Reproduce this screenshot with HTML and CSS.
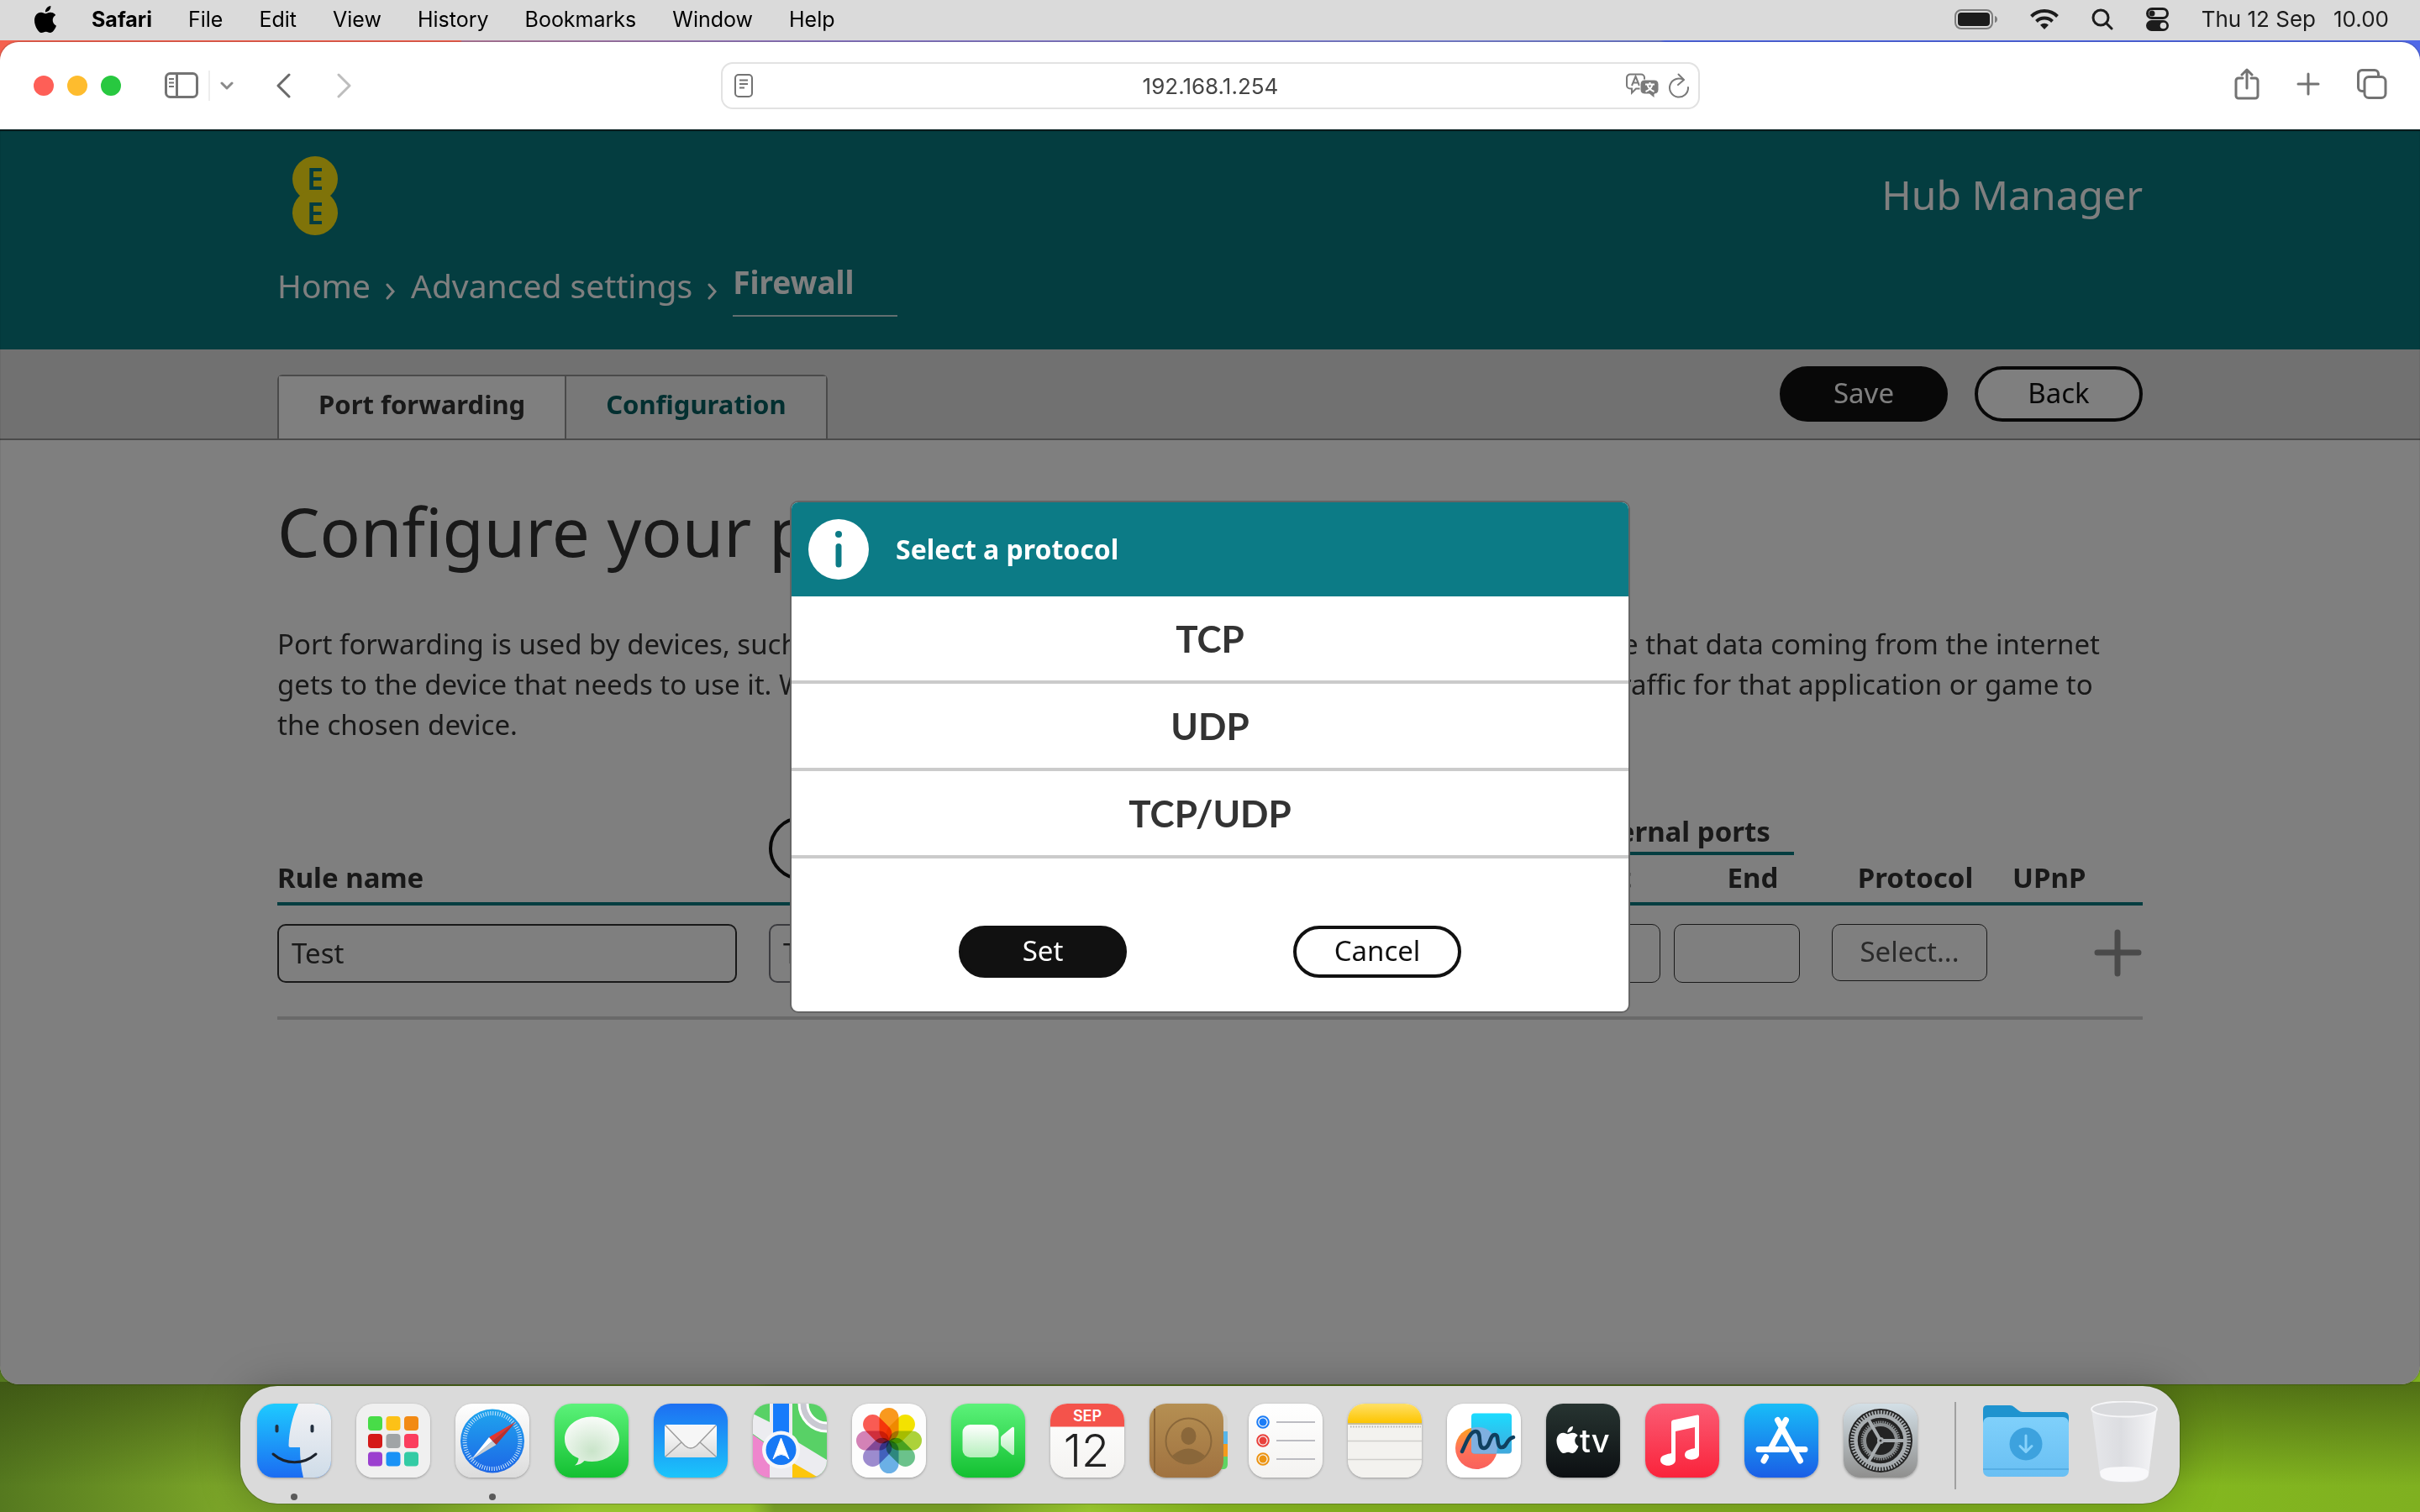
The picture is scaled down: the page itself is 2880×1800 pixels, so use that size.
FILE: index.html
```html
<!DOCTYPE html>
<html lang="en">
<head>
<meta charset="utf-8">
<meta name="viewport" content="width=device-width, initial-scale=1">
<title>Hub Manager - Port forwarding</title>
<link rel="stylesheet" href="styles.css">
</head>
<body>
<svg class="defs" aria-hidden="true">
  <defs>
    <symbol id="apple" viewBox="0 0 24 24"><path d="M12.152 6.896c-.948 0-2.415-1.078-3.96-1.04-2.04.027-3.91 1.183-4.961 3.014-2.117 3.675-.546 9.103 1.519 12.09 1.013 1.454 2.208 3.09 3.792 3.039 1.52-.065 2.09-.987 3.935-.987 1.831 0 2.35.987 3.96.948 1.637-.026 2.676-1.48 3.676-2.948 1.156-1.688 1.636-3.325 1.662-3.415-.039-.013-3.182-1.221-3.22-4.857-.026-3.04 2.48-4.494 2.597-4.559-1.429-2.09-3.623-2.324-4.39-2.376-2-.156-3.675 1.09-4.61 1.09zM15.53 3.83c.843-1.012 1.4-2.427 1.245-3.83-1.207.052-2.662.805-3.532 1.818-.78.896-1.454 2.338-1.273 3.714 1.338.104 2.715-.688 3.559-1.701"/></symbol>
    <linearGradient id="gBlue" x2="0" y2="1"><stop stop-color="#1ecbff"/><stop offset="1" stop-color="#1b6cf2"/></linearGradient>
    <linearGradient id="gFace" x2="0" y2="1"><stop stop-color="#f2f2f5"/><stop offset="1" stop-color="#cfdce8"/></linearGradient>
    <linearGradient id="gGreen" x2="0" y2="1"><stop stop-color="#5cf27a"/><stop offset="1" stop-color="#13c031"/></linearGradient>
    <linearGradient id="gMail" x2="0" y2="1"><stop stop-color="#1d6ff2"/><stop offset="1" stop-color="#1bc5fb"/></linearGradient>
    <linearGradient id="gWhite" x2="0" y2="1"><stop stop-color="#fff"/><stop offset="1" stop-color="#dcdcdc"/></linearGradient>
    <linearGradient id="gPaper" x2="0" y2="1"><stop stop-color="#fff"/><stop offset="1" stop-color="#f4f3f1"/></linearGradient>
    <linearGradient id="gSafari" x2="0" y2="1"><stop stop-color="#1fa5ee"/><stop offset="1" stop-color="#1d66e6"/></linearGradient>
    <radialGradient id="gBubble" cy=".7" r=".8"><stop stop-color="#c9e4c9"/><stop offset="1" stop-color="#fff"/></radialGradient>
    <linearGradient id="gCam" x2="0" y2="1"><stop stop-color="#fff"/><stop offset="1" stop-color="#b4efbb"/></linearGradient>
    <linearGradient id="gBook" x2="0" y2="1"><stop stop-color="#b58f52"/><stop offset="1" stop-color="#a07240"/></linearGradient>
    <linearGradient id="gNote" x2="0" y2="1"><stop stop-color="#ffe066"/><stop offset="1" stop-color="#fdc500"/></linearGradient>
    <linearGradient id="gCyan" x2="0" y2="1"><stop stop-color="#1bdcff"/><stop offset="1" stop-color="#41a8dc"/></linearGradient>
    <linearGradient id="gCoral" x2="0" y2="1"><stop stop-color="#fba41f"/><stop offset=".5" stop-color="#ff7458"/><stop offset="1" stop-color="#f9605c"/></linearGradient>
    <linearGradient id="gTv" x2="0" y2="1"><stop stop-color="#273431"/><stop offset="1" stop-color="#0c0f12"/></linearGradient>
    <linearGradient id="gMusic" x2="0" y2="1"><stop stop-color="#fb5c74"/><stop offset="1" stop-color="#fa233b"/></linearGradient>
    <linearGradient id="gStore" x2="0" y2="1"><stop stop-color="#18bdf8"/><stop offset="1" stop-color="#1a5ee6"/></linearGradient>
    <linearGradient id="gMetal" x2="0" y2="1"><stop stop-color="#d3dfe6"/><stop offset="1" stop-color="#8f8f8e"/></linearGradient>
    <linearGradient id="gFolder" x2="0" y2="1"><stop stop-color="#7fd0fb"/><stop offset="1" stop-color="#69bff3"/></linearGradient>
    <linearGradient id="gBin"><stop stop-color="#e6e7ea"/><stop offset=".45" stop-color="#dcdde1"/><stop offset="1" stop-color="#f6f6f8"/></linearGradient>
  </defs>
</svg>

<header class="menubar">
  <nav class="menus" aria-label="Menu bar">
    <svg class="apple" width="32" height="32"><use href="#apple"/></svg>
    <b>Safari</b><span>File</span><span>Edit</span><span>View</span><span>History</span><span>Bookmarks</span><span>Window</span><span>Help</span>
  </nav>
  <div class="status">
    <svg width="51" height="24" viewBox="0 0 51 24"><rect x="1" y="1" width="44" height="22" rx="7" fill="none" stroke="#7c7c7c" stroke-width="2"/><rect x="4" y="4" width="38" height="16" rx="4" fill="#1c1c1c"/><path d="M48 8c4 1 4 7 0 8z" fill="#7c7c7c"/></svg>
    <svg width="34" height="26" viewBox="0 0 34 26"><g fill="none" stroke="#1c1c1c" stroke-width="4"><path d="M1.500 9.500a22 22 0 0 1 31 0"/><path d="M7.500 15.500a13.500 13.500 0 0 1 19 0"/></g><path d="M17 25l-5-5.200a7 7 0 0 1 10 0z" fill="#1c1c1c"/></svg>
    <svg width="26" height="26" viewBox="0 0 26 26"><g fill="none" stroke="#1c1c1c" stroke-width="3" stroke-linecap="round"><circle cx="11" cy="11" r="9"/><path d="M18 18l6 6"/></g></svg>
    <svg width="27" height="28" viewBox="0 0 27 28"><rect x="1.500" y="1.500" width="24" height="11" rx="5.500" fill="none" stroke="#1c1c1c" stroke-width="3"/><circle cx="7" cy="7" r="3.500" fill="#1c1c1c"/><rect y="15" width="27" height="13" rx="6.500" fill="#1c1c1c"/><circle cx="20.500" cy="21.500" r="3.800" fill="#dadada"/></svg>
    <time class="clock" datetime="10:00"><span>Thu 12 Sep</span><span>10.00</span></time>
  </div>
</header>

<main class="window">
  <div class="toolbar">
    <div class="tools">
      <div class="lights"><i class="light red"></i><i class="light amber"></i><i class="light green"></i></div>
      <div class="sidebar-tools">
        <button class="tool" aria-label="Sidebar"><svg width="40" height="32" viewBox="0 0 40 32" fill="none" stroke="#737373" stroke-width="3"><rect x="1.500" y="1.500" width="37" height="28" rx="5"/><path d="M14.500 2v28"/><path d="M5 8h6M5 12.500h6M5 17h6" stroke-width="2"/></svg></button>
        <span class="divider"></span>
        <button class="tool" aria-label="Tab groups"><svg width="16" height="10" viewBox="0 0 16 10" fill="none" stroke="#8a8a8a" stroke-width="3" stroke-linecap="round" stroke-linejoin="round"><path d="M2 2l6 6 6-6"/></svg></button>
      </div>
      <div class="history">
        <button class="tool" aria-label="Back"><svg width="18" height="30" viewBox="0 0 18 30" fill="none" stroke="#6a6a6a" stroke-width="3" stroke-linecap="round" stroke-linejoin="round"><path d="M16 2L3 15l13 13"/></svg></button>
        <button class="tool" aria-label="Forward"><svg width="18" height="30" viewBox="0 0 18 30" fill="none" stroke="#bdbdbd" stroke-width="3" stroke-linecap="round" stroke-linejoin="round"><path d="M2 2l13 13L2 28"/></svg></button>
      </div>
    </div>
    <form class="address">
      <svg width="22" height="28" viewBox="0 0 22 28" fill="none" stroke="#737373" stroke-width="2"><rect x="1" y="1" width="20" height="26" rx="4"/><path d="M6 7.500h10M6 12h10M6 16.500h6"/></svg>
      <input class="url" aria-label="Address" value="192.168.1.254">
      <svg width="40" height="30" viewBox="0 0 40 30"><path d="M5 1.500h13a4 4 0 0 1 4 4v9a4 4 0 0 1-4 4h-6l-5 5v-5H5a4 4 0 0 1-4-4v-9a4 4 0 0 1 4-4z" fill="none" stroke="#7a7a7a" stroke-width="2"/><path d="M7 15l4.500-11L16 15M8.500 11.500h6" fill="none" stroke="#7a7a7a" stroke-width="2"/><path d="M22 8h12a5 5 0 0 1 5 5v7a5 5 0 0 1-5 5v5l-6-5h-6a5 5 0 0 1-5-5v-7a5 5 0 0 1 5-5z" fill="#7a7a7a" stroke="#fff"/><path d="M23 13.500h11M28.500 11v2.500M31.500 13.500c-1 4-4 7-8 8.500M25.500 13.500c1 4 4 7 8 8.500" fill="none" stroke="#fff" stroke-width="2"/></svg>
      <button class="tool" type="button" aria-label="Reload"><svg width="26" height="30" viewBox="0 0 26 30" fill="none" stroke="#7a7a7a" stroke-width="2" stroke-linecap="round" stroke-linejoin="round"><path d="M18.500 8A11 11 0 1 0 24 17"/><path d="M12.500 1.500l6.500 6.500-7 6"/></svg></button>
    </form>
    <div class="tools actions">
      <button class="tool" aria-label="Share"><svg width="30" height="38" viewBox="0 0 30 38" fill="none" stroke="#737373" stroke-width="3" stroke-linecap="round" stroke-linejoin="round"><path d="M10 12H5a3 3 0 0 0-3 3v18a3 3 0 0 0 3 3h20a3 3 0 0 0 3-3V15a3 3 0 0 0-3-3h-5M15 24V2M9 8l6-6 6 6"/></svg></button>
      <button class="tool" aria-label="New tab"><svg width="28" height="28" viewBox="0 0 28 28" fill="none" stroke="#737373" stroke-width="3" stroke-linecap="round"><path d="M14 2v24M2 14h24"/></svg></button>
      <button class="tool" aria-label="Tab overview"><svg width="36" height="36" viewBox="0 0 36 36" fill="none" stroke="#737373" stroke-width="3"><rect x="9" y="9.500" width="25" height="25" rx="5"/><path d="M9 26.500H6A4.500 4.500 0 0 1 1.500 22V6A4.500 4.500 0 0 1 6 1.500h15A4.500 4.500 0 0 1 25.500 6v3"/></svg></button>
    </div>
  </div>

  <div class="viewport">
    <header class="site-header">
      <div class="container">
        <div class="brand">
          <svg width="54" height="94" viewBox="0 0 54 94" role="img" aria-label="EE"><g fill="#fee612"><circle cx="27" cy="27" r="27"/><circle cx="27" cy="67" r="27"/></g><g class="ee" text-anchor="middle"><text x="27" y="40">E</text><text x="27" y="81">E</text></g></svg>
          <span class="product">Hub Manager</span>
        </div>
        <nav class="crumbs" aria-label="Breadcrumb">
          <a href="#home">Home</a>
          <svg width="12" height="20" viewBox="0 0 12 20"><path d="M2 2l7 8-7 8"/></svg>
          <a href="#advanced">Advanced settings</a>
          <svg width="12" height="20" viewBox="0 0 12 20"><path d="M2 2l7 8-7 8"/></svg>
          <a href="#firewall" class="current" aria-current="page">Firewall</a>
        </nav>
      </div>
    </header>

    <div class="tabbar">
      <div class="container tabrow">
        <nav class="tabs"><a href="#forwarding" class="tab selected">Port forwarding</a><a href="#configuration" class="tab">Configuration</a></nav>
        <div class="page-actions"><button class="pill solid">Save</button><button class="pill">Back</button></div>
      </div>
    </div>

    <section class="container content">
      <h1>Configure your port forwarding</h1>
      <p>Port forwarding is used by devices, such as games consoles, on the inside of your networks to make sure that data coming from the internet<br>gets to the device that needs to use it. When you add a port forwarding rule, your hub will send all the traffic for that application or game to<br>the chosen device.</p>
      <table class="rules">
        <colgroup><col class="c-rule"><col class="c-device"><col class="c-start"><col class="c-end"><col class="c-start"><col class="c-end"><col class="c-protocol"><col class="c-upnp"><col class="c-add"></colgroup>
        <thead>
          <tr>
            <th rowspan="2" class="low">Rule name</th>
            <th rowspan="2" class="top"><button class="pill large">Refresh devices</button></th>
            <th colspan="2" class="group"><span>External ports</span></th>
            <th colspan="2" class="group"><span>Internal ports</span></th>
            <th rowspan="2" class="low mid">Protocol</th>
            <th rowspan="2" class="low">UPnP</th>
            <td rowspan="2" class="low"></td>
          </tr>
          <tr><th class="low mid">Start</th><th class="low end">End</th><th class="low mid">Start</th><th class="low end">End</th></tr>
        </thead>
        <tbody>
          <tr>
            <td><input class="field name" aria-label="Rule name" value="Test"></td>
            <td><input class="field device" aria-label="Device" value="Test device"></td>
            <td><input class="field port" aria-label="External start port"></td>
            <td><input class="field port" aria-label="External end port"></td>
            <td><input class="field port" aria-label="Internal start port"></td>
            <td><input class="field port" aria-label="Internal end port"></td>
            <td><button class="field choose">Select...</button></td>
            <td></td>
            <td><button class="tool add" aria-label="Add rule"><svg width="58" height="58" viewBox="0 0 58 58" fill="none" stroke="#959595" stroke-width="7" stroke-linecap="round"><path d="M28 4v49M4 28h49"/></svg></button></td>
          </tr>
        </tbody>
      </table>
    </section>

    <div class="overlay">
      <div class="modal" role="dialog" aria-labelledby="modal-title">
        <div class="modal-head">
          <svg width="72" height="72" viewBox="0 0 72 72"><circle cx="36" cy="36" r="36" fill="#fff"/><circle cx="36" cy="18" r="4" fill="#0c7b86"/><path d="M36 32.500V54" stroke="#0c7b86" stroke-width="7" stroke-linecap="round"/></svg>
          <h2 id="modal-title">Select a protocol</h2>
        </div>
        <button class="option">TCP</button>
        <button class="option">UDP</button>
        <button class="option">TCP/UDP</button>
        <div class="modal-actions"><button class="pill solid short">Set</button><button class="pill short">Cancel</button></div>
      </div>
    </div>
  </div>
</main>

<nav class="dock" aria-label="Dock">
  <div class="app running"><svg viewBox="0 0 88 88"><rect width="88" height="88" fill="url(#gBlue)"/><path d="M49 0C42 15 38 32 37.500 50q0 2 2 2H51c0 12 1 24 4 36h33V0z" fill="url(#gFace)"/><path d="M23.500 27v5.500M65.500 27v5.500" stroke="#23303f" stroke-width="4" stroke-linecap="round"/><path d="M19 60c15 13 36 13 51 0" fill="none" stroke="#1b222c" stroke-width="3" stroke-linecap="round"/></svg></div>
  <div class="app"><svg viewBox="0 0 88 88"><rect width="88" height="88" fill="#f0f0f0"/><rect x="14" y="15" width="17" height="17" rx="4" fill="#48dc48"/><rect x="35.500" y="15" width="17" height="17" rx="4" fill="#fcc117"/><rect x="57" y="15" width="17" height="17" rx="4" fill="#f28a14"/><rect x="14" y="36" width="17" height="17" rx="4" fill="#d51a18"/><rect x="35.500" y="36" width="17" height="17" rx="4" fill="#a0a4a6"/><rect x="57" y="36" width="17" height="17" rx="4" fill="#fb3e5e"/><rect x="14" y="57.500" width="17" height="17" rx="4" fill="#9b40cf"/><rect x="35.500" y="57.500" width="17" height="17" rx="4" fill="#1a92f6"/><rect x="57" y="57.500" width="17" height="17" rx="4" fill="#33cba4"/></svg></div>
  <div class="app running"><svg viewBox="0 0 88 88"><rect width="88" height="88" fill="url(#gWhite)"/><circle cx="44" cy="44.500" r="38" fill="url(#gSafari)"/><circle cx="44" cy="44.500" r="33" fill="none" stroke="#cfe8fb" stroke-width="5" stroke-dasharray="1 1.880"/><path d="M72 21.500L40 40l4 4.500z" fill="#e5342c"/><path d="M72 21.500L48.500 49 44 44.500z" fill="#b9302c"/><path d="M18.500 67L40 40l4 4.500z" fill="#fff"/><path d="M18.500 67l30-18-4.500-4.500z" fill="#c9cdd2"/></svg></div>
  <div class="app"><svg viewBox="0 0 88 88"><rect width="88" height="88" fill="url(#gGreen)"/><path d="M44.500 15.500C62.500 15.500 77 27 77 42S62.500 69 44.500 69q-5 0-9-1-4 4.500-11.500 5.500 4.500-3.500 4.500-8.500C18 61 12 52 12 42c0-15 14.500-26.500 32.500-26.500z" fill="url(#gBubble)"/></svg></div>
  <div class="app"><svg viewBox="0 0 88 88"><rect width="88" height="88" fill="url(#gMail)"/><rect x="13" y="25" width="62" height="39" rx="3" fill="url(#gWhite)"/><path d="M14 63l19-17M74 63L55 46" stroke="#9d9d9d" stroke-width="1.500"/><path d="M14 26l23 24q7 6 14 0l23-24" fill="#f6f6f6" stroke="#9d9d9d" stroke-width="1.500"/></svg></div>
  <div class="app"><svg viewBox="0 0 88 88"><rect width="88" height="88" fill="#58d166"/><path d="M0 37l20 14v37H0z" fill="#ee86cd"/><path d="M47 64l32 24H47z" fill="#fdc60c"/><path d="M0 12l20 10V0h27v42l41 25v21H78L47 70v18H20V50L0 36z" fill="#ececf0"/><path d="M24 0h19v40H24z" fill="#167bfb"/><circle cx="88" cy="0" r="28" fill="none" stroke="#fff" stroke-width="13"/><circle cx="88" cy="0" r="28" fill="none" stroke="#c9c9d2" stroke-width="7"/><circle cx="33.500" cy="55" r="22.500" fill="#f6f6f8"/><circle cx="33.500" cy="55" r="18" fill="#1779f5"/><path d="M33.500 41L43 66q-9-11-19 0z" fill="#fff" stroke="#fff" stroke-linejoin="round"/></svg></div>
  <div class="app"><svg viewBox="0 0 88 88"><rect width="88" height="88" fill="#fdfdfd"/><g class="petals"><rect x="32.500" y="5" width="23" height="39" rx="11.500" fill="#fb9a1e"/><rect x="32.500" y="5" width="23" height="39" rx="11.500" fill="#f5e400" transform="rotate(45 44 44)"/><rect x="32.500" y="5" width="23" height="39" rx="11.500" fill="#aed43a" transform="rotate(90 44 44)"/><rect x="32.500" y="5" width="23" height="39" rx="11.500" fill="#6cc48c" transform="rotate(135 44 44)"/><rect x="32.500" y="5" width="23" height="39" rx="11.500" fill="#6cb2e8" transform="rotate(180 44 44)"/><rect x="32.500" y="5" width="23" height="39" rx="11.500" fill="#9d8cd0" transform="rotate(225 44 44)"/><rect x="32.500" y="5" width="23" height="39" rx="11.500" fill="#d583b8" transform="rotate(270 44 44)"/><rect x="32.500" y="5" width="23" height="39" rx="11.500" fill="#fb5c53" transform="rotate(315 44 44)"/></g></svg></div>
  <div class="app"><svg viewBox="0 0 88 88"><rect width="88" height="88" fill="url(#gGreen)"/><rect x="13.500" y="25" width="43" height="39" rx="9" fill="url(#gCam)"/><path d="M59 41q0-2 1.500-3L72 28.500q3-2 3 1.500v29q0 3.500-3 1.500L60.500 51Q59 50 59 48z" fill="url(#gCam)"/></svg></div>
  <div class="app"><svg viewBox="0 0 88 88"><rect width="88" height="88" fill="url(#gPaper)"/><rect width="88" height="27.500" fill="#f4534b"/><g text-anchor="middle"><text class="month" x="44" y="21">SEP</text><text class="day" x="43" y="75">12</text></g></svg></div>
  <div class="app"><svg class="open" viewBox="0 0 88 88"><path d="M80 12h9q4 2 4 8v13H80z" fill="#d4d2ce"/><path d="M80 33h13v15H80z" fill="#58b5e8"/><path d="M80 48h13v15H80z" fill="#f59a1c"/><path d="M80 63h13v9q0 5-4 6h-9z" fill="#5fd463"/><rect width="88" height="88" rx="20" fill="url(#gBook)"/><path d="M6 6v76" stroke="#8a6436" stroke-width="2"/><circle cx="46.500" cy="44.500" r="27" fill="none" stroke="#8a673a" stroke-width="2"/><ellipse cx="46.500" cy="38.500" rx="9" ry="10.500" fill="#8a673a"/><path d="M27 62q19-17 39 0-19 19-39 0z" fill="#8a673a"/></svg></div>
  <div class="app"><svg viewBox="0 0 88 88"><rect width="88" height="88" fill="url(#gPaper)"/><g fill="none" stroke-width="2"><circle cx="17" cy="22" r="6.800" stroke="#1b7cf6"/><circle cx="17" cy="44" r="6.800" stroke="#e9413c"/><circle cx="17" cy="66" r="6.800" stroke="#ec9412"/><path d="M33 22h46M33 44h46M33 66h46" stroke="#bcbcc2"/></g><circle cx="17" cy="22" r="4.500" fill="#1b7cf6"/><circle cx="17" cy="44" r="4.500" fill="#e9413c"/><circle cx="17" cy="66" r="4.500" fill="#ec9412"/></svg></div>
  <div class="app"><svg viewBox="0 0 88 88"><rect width="88" height="88" fill="#f3f2ef"/><rect width="88" height="23" fill="url(#gNote)"/><path d="M0 24h88" stroke="#b7a873" stroke-width="1.500"/><path d="M3 27.500h84" stroke="#b5b5b0" stroke-width="2" stroke-dasharray="1.500 1.700"/><path d="M0 44.500h88M0 66.500h88" stroke="#cfcecb" stroke-width="1.500"/></svg></div>
  <div class="app"><svg viewBox="0 0 88 88"><rect width="88" height="88" fill="#fff"/><circle cx="35" cy="53" r="25" fill="url(#gCoral)"/><rect x="29" y="11.500" width="48" height="48" rx="4" fill="url(#gCyan)"/><path d="M29 29q26-6 31 24l-1 6.500H33q-4 0-4-4z" fill="#7fb0e0"/><path d="M18 57c4-8 9-24 16-24 9 0 1 20 10 20 8 0 6-16 13-16 6 0 1 13 7 15 8 1 6-10 15-12" fill="none" stroke="#10405f" stroke-width="4.500" stroke-linecap="round"/></svg></div>
  <div class="app"><svg viewBox="0 0 88 88"><rect width="88" height="88" fill="url(#gTv)"/><use href="#apple" x="9" y="27" width="33" height="32" fill="#fff"/><text class="tv" x="40" y="58">tv</text></svg></div>
  <div class="app"><svg viewBox="0 0 88 88"><rect width="88" height="88" fill="url(#gMusic)"/><path d="M31 22q0-2 2-2.500l29-6q2-.5 2 1.500v46c0 7-17 8-17 0 0-6 8-7 12-8V28l-23 5v34c0 9-18 9-18 0 0-6 9-7 13-8z" fill="#fff"/></svg></div>
  <div class="app"><svg viewBox="0 0 88 88"><rect width="88" height="88" fill="url(#gStore)"/><path d="M49.500 19.500L31 54M25.500 63.500l-2.500 4.500M39.500 19.500L66.500 68M17 54.500h33M60 54.500h12" stroke="#fff" stroke-width="7" stroke-linecap="round"/></svg></div>
  <div class="app"><svg viewBox="0 0 88 88"><rect width="88" height="88" fill="url(#gMetal)"/><circle cx="44" cy="44" r="38" fill="#232323"/><g fill="none" stroke="#a8adb0"><circle cx="44" cy="44" r="33.500" stroke-width="5" stroke-dasharray="2 1.500"/><circle cx="44" cy="44" r="29.500" stroke-width="4.500"/><circle cx="44" cy="44" r="22" stroke="#8b8f91" stroke-width="3" stroke-dasharray="1.500 1.200"/><circle cx="44" cy="44" r="19" stroke="#8b8f91" stroke-width="4"/><path d="M44 44h28M44 44L30 19.500M44 44L30 68.500" stroke-width="4"/></g><circle cx="44" cy="44" r="4" fill="#a8adb0"/><circle cx="44" cy="44" r="1.500" fill="#333"/></svg></div>
  <span class="dock-line"></span>
  <div class="places">
    <svg width="102" height="88" viewBox="0 0 102 88"><path d="M0 7q0-5 5-5h27q3 0 5 2l5 4q2 2 5 2h49q6 0 6 6v30H0z" fill="#1e93cf"/><rect y="16" width="102" height="71" rx="7" fill="url(#gFolder)"/><path d="M0 78h102" stroke="#56aee4" stroke-width="2"/><circle cx="51" cy="48" r="19.500" fill="#3da2de"/><path d="M51 38v19M44 50.500l7 7 7-7" fill="none" stroke="#86d2fb" stroke-width="3" stroke-linecap="round" stroke-linejoin="round"/></svg>
    <svg width="80" height="98" viewBox="0 0 80 98"><path d="M1 9l10 79q2 9 29 9t29-9L79 9z" fill="url(#gBin)"/><path d="M11 84q3-6 29-6t29 6l-1 5q-3 7-28 7t-28-7z" fill="#f8f8fa"/><ellipse cx="40" cy="9.500" rx="39" ry="9" fill="#d9dadd" stroke="#f6f6f8" stroke-width="2"/></svg>
  </div>
</nav>
</body>
</html>
```
FILE: styles.css
```css
*, *::before, *::after { box-sizing: border-box; }

:root {
  --ui: "Inter", "Liberation Sans", sans-serif;
  --site: "Noto Sans", "Open Sans", sans-serif;
  --teal: #087a80;
  --ink: #333;
}

html, body { margin: 0; }
svg { display: block; flex: none; }
button, input { font: inherit; color: inherit; margin: 0; }
button { cursor: pointer; }
a { color: inherit; text-decoration: none; }

.defs { position: absolute; width: 0; height: 0; }

body {
  display: flex;
  flex-direction: column;
  min-height: 100vh;
  font-family: var(--ui);
  background:
    linear-gradient(90deg, #f4614f 0 19%, #b57b9d 19.1%, #8b76c4 34%, #7b84d6 60%, #6e7bd0 68.6%, #5068e8 68.8% 100%) top / 100% 90px no-repeat,
    linear-gradient(180deg, rgba(48, 66, 14, .6), rgba(48, 66, 14, 0) 80%) bottom / 100% 155px no-repeat,
    linear-gradient(90deg, #55791f 0, #7aa428 9%, #80ab2a 17%, #a6d733 24% 31%, #82ac29 32% 40%, #a6d733 45%, #90c222 50%, #86b322 70%, #84b81f 90%, #7fb020 100%);
}

/* Menu bar */
.menubar {
  display: flex;
  justify-content: space-between;
  align-items: center;
  height: 48px;
  padding: 0 37px 2px 38px;
  background: #dadada;
  color: #000;
}
.menus { display: flex; align-items: center; gap: 43px; font-size: 25px; line-height: 32px; }
.apple { margin-right: -4px; }
.status { display: flex; align-items: center; gap: 39px; font-size: 26px; line-height: 32px; color: #1c1c1c; }
.clock { display: flex; gap: 21px; }

/* Browser window */
.window {
  flex: 1;
  display: flex;
  flex-direction: column;
  margin-top: 2px;
  border-radius: 22px;
  overflow: hidden;
  box-shadow: 0 0 2px rgba(0, 0, 0, .6);
}
.toolbar {
  display: grid;
  grid-template-columns: 1fr minmax(0, 1165px) 1fr;
  align-items: center;
  height: 104px;
  padding: 0 39px 0 40px;
  background: #fff;
}
.tools, .lights, .sidebar-tools, .history { display: flex; align-items: center; }
.lights { gap: 16px; }
.light { width: 24px; height: 24px; border-radius: 50%; }
.red { background: #fe5f57; }
.amber { background: #febc2e; }
.green { background: #28c840; }
.sidebar-tools { gap: 12px; margin-left: 52px; }
.divider { width: 2px; height: 36px; background: #ededed; }
.history { gap: 55px; margin-left: 50px; }
.actions { justify-content: flex-end; gap: 44px; padding-bottom: 4px; }
.tool { padding: 0; border: 0; background: none; }
.address {
  display: flex;
  align-items: center;
  gap: 10px;
  height: 56px;
  padding: 0 10px 0 14px;
  border: 2px solid #e2e2e2;
  border-radius: 14px;
}
.url {
  flex: 1;
  min-width: 0;
  padding: 2px 0 0 50px;
  border: 0;
  background: none;
  font-size: 26px;
  line-height: 32px;
  text-align: center;
  color: #454545;
}

/* Hub pages */
.viewport { position: relative; flex: 1; background: #fff; font-family: var(--site); color: var(--ink); }
.container { width: 100%; max-width: 2220px; margin: 0 auto; }
.site-header { padding: 32px 0 39px; background: var(--teal); color: #fff; }
.brand { display: flex; justify-content: space-between; align-items: center; padding-left: 18px; }
.ee { font-family: var(--site); font-weight: 600; font-size: 36px; fill: var(--teal); }
.product { padding-bottom: 3px; font-size: 48px; line-height: 64px; }
.crumbs { display: flex; align-items: flex-start; gap: 18px; margin-top: 32px; font-size: 39px; line-height: 48px; }
.crumbs a { padding-top: 4px; }
.crumbs svg { margin-top: 25px; fill: none; stroke: #fff; stroke-width: 3; stroke-linecap: round; }
.crumbs .current {
  width: 196px;
  padding: 0 0 15px;
  border-bottom: 2px solid #c4dfe0;
  font-size: 37px;
  font-weight: 700;
}

.tabbar { border-bottom: 2px solid #959595; background: #e3e3e3; }
.tabrow { display: flex; justify-content: space-between; align-items: flex-end; height: 106px; }
.tabs { display: flex; font-size: 31px; font-weight: 700; line-height: 48px; border: 2px solid #959595; border-bottom: 0; border-radius: 6px 6px 0 0; }
.tab { padding: 9px 47px 17px; background: #f0f0f0; color: #065e60; }
.tab.selected { background: #fff; color: var(--ink); border-right: 2px solid #959595; }
.page-actions { display: flex; gap: 32px; margin-bottom: 20px; }

.pill {
  width: 200px;
  height: 66px;
  padding: 0 0 2px;
  border: 4px solid #111;
  border-radius: 38px;
  background: #fff;
  color: #111;
  font-size: 33px;
  line-height: 40px;
}
.pill.solid { background: #111; color: #fff; }
.pill.short { height: 62px; }
.pill.large { width: 360px; height: 76px; }

.content { padding: 60px 0 40px; }
h1 { margin: 0; font-size: 80px; font-weight: 400; line-height: 96px; }
p { margin: 63px 0 77px; font-size: 33px; line-height: 48px; }

.rules { width: 100%; table-layout: fixed; border-collapse: separate; border-spacing: 0; font-size: 33px; line-height: 40px; }
.c-rule { width: 585px; }
.c-device { width: 557px; }
.c-start { width: 166px; }
.c-end { width: 188px; }
.c-protocol { width: 215px; }
.c-upnp { width: 97px; }
.c-add { width: 58px; }
.rules th { padding: 0; font-weight: 700; text-align: left; }
.rules .low { padding: 7px 0 9px; border-bottom: 4px solid var(--teal); vertical-align: bottom; }
.rules .mid { padding-right: 16px; text-align: center; }
.rules .end { text-align: center; }
.rules .group { vertical-align: top; }
.rules .top { padding-top: 8px; border-bottom: 4px solid var(--teal); vertical-align: top; }
.group span { display: block; margin: 0 45px 0 23px; padding: 6px 0 4px; border-bottom: 4px solid var(--teal); text-align: center; }
tbody td { height: 136px; padding: 22px 0 0; border-bottom: 4px solid #d2d2d2; vertical-align: top; }
.field {
  display: block;
  height: 70px;
  padding: 0 15px 2px;
  border: 2px solid var(--ink);
  border-radius: 10px;
  background: #fff;
  line-height: 40px;
}
.name { width: 547px; }
.device { width: 520px; border-color: #77777f; }
.port { width: 150px; border-width: 1px; }
.choose { width: 185px; height: 68px; padding: 0 0 2px; border-width: 1px; text-align: center; color: #555; }
.add { display: block; }
.add svg { margin-top: 6px; }

/* Protocol dialog */
.overlay {
  position: absolute;
  inset: 0;
  display: flex;
  align-items: center;
  justify-content: center;
  background: rgba(0, 0, 0, .5);
  box-shadow: inset 0 2px 1px rgba(0, 0, 0, .6);
}
.modal {
  width: 996px;
  max-width: 90%;
  overflow: hidden;
  border-radius: 8px;
  background: #fff;
  box-shadow: 0 0 0 2px #656565;
}
.modal-head { display: flex; align-items: center; gap: 32px; height: 112px; padding: 0 20px; background: #0c7b86; color: #fff; }
h2 { margin: 0; font-size: 32px; line-height: 40px; font-weight: 700; }
.option {
  display: block;
  width: 100%;
  height: 104px;
  padding: 0;
  border: 0;
  border-bottom: 4px solid #cbcbcb;
  background: #fff;
  color: var(--ink);
  font-family: "Lato", var(--site);
  font-size: 44px;
  font-weight: 700;
  line-height: 56px;
}
.modal-actions { display: flex; justify-content: center; gap: 198px; padding: 80px 0 40px; }

/* Dock */
.dock {
  position: relative;
  display: flex;
  align-self: center;
  gap: 30px;
  height: 140px;
  margin: 2px 0 10px;
  padding: 21px 26px 0 20px;
  border-radius: 44px;
  background: #dadada;
  box-shadow: 0 0 0 1px rgba(60, 80, 30, .4), 0 0 50px rgba(0, 0, 0, .25);
}
.app { position: relative; width: 88px; height: 88px; }
.app svg { width: 88px; height: 88px; border-radius: 20px; overflow: hidden; box-shadow: 0 1px 3px rgba(0, 0, 0, .3); }
.app svg.open { overflow: visible; }
.running::after {
  content: "";
  position: absolute;
  left: 40px;
  top: 107px;
  width: 8px;
  height: 8px;
  border-radius: 50%;
  background: #5a5a5a;
}
.petals rect { mix-blend-mode: multiply; }
.month { font-family: var(--ui); font-size: 18px; font-weight: 600; fill: #fff; }
.day { font-family: var(--ui); font-size: 54px; font-weight: 300; fill: #222; }
.tv { font-family: var(--ui); font-size: 38px; font-weight: 500; fill: #fff; }
.dock-line { width: 2px; height: 104px; margin: -2px 0 0 14px; background: #a0a0a0; }
.places { display: flex; gap: 26px; margin-left: 2px; }
.places svg + svg { margin-top: -3px; }
```
